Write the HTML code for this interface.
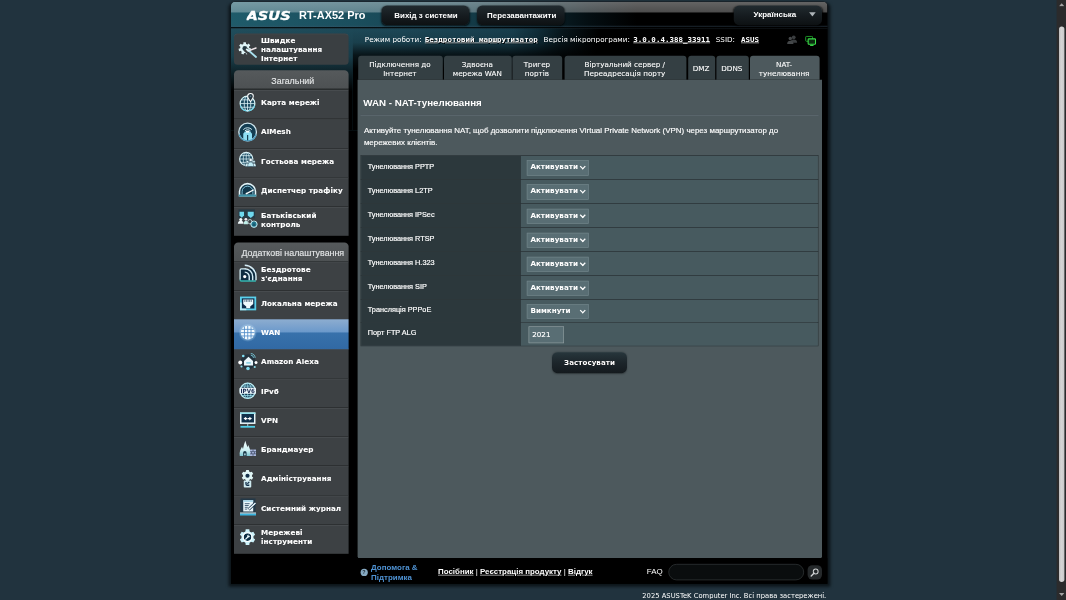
<!DOCTYPE html>
<html lang="uk">
<head>
<meta charset="utf-8">
<title>ASUS Wireless Router RT-AX52 Pro - NAT-тунелювання</title>
<style>
html,body{margin:0;padding:0;width:1066px;height:600px;overflow:hidden;background:#21333e;}
#stage{position:absolute;left:0;top:0;width:1777px;height:1000px;transform:scale(0.6);transform-origin:0 0;background:#21333e;font-family:"DejaVu Sans","Liberation Sans",sans-serif;color:#fff;}
.abs{position:absolute;}
#in{left:-1px;top:0;width:996px;height:971px;}
#wrap{left:385px;top:3px;width:994.3px;height:970px;background:#000;border-radius:7px 7px 0 0;overflow:hidden;}
#wrapsh{left:380.5px;top:4px;width:1003px;height:974px;background:#0c1419;border-radius:9px 9px 2px 2px;filter:blur(3px);}
#banner{left:1px;top:0;width:994px;height:44px;background:linear-gradient(180deg,rgba(255,255,255,.48) 0,rgba(255,255,255,.39) 1px,rgba(255,255,255,.30) 17.2px,rgba(255,255,255,0) 18.4px),linear-gradient(90deg,#1f5b6a 0%,#1b4f5e 20%,#153f4c 38%,#0c2831 50%,#040e12 60%,#000 68%);}
#bannerline{left:0;top:38.5px;width:996px;height:7px;background:linear-gradient(180deg,rgba(0,0,0,0) 0,rgba(60,85,105,.35) 1.5px,rgba(60,85,105,.35) 3px,rgba(0,0,0,.8) 3.6px,rgba(0,0,0,.8) 5px,rgba(50,70,85,.25) 5.600px,rgba(0,0,0,0) 7px);}
#under{left:0;top:44px;width:996px;height:170px;background:linear-gradient(100deg,#225261 0%,#1e4b5b 28%,#194252 46%,#10303c 50%,#08181e 54%,#000 60%);}
#underfade{left:204px;top:44px;width:792px;height:170px;background:linear-gradient(180deg,rgba(0,0,0,.05) 0,rgba(0,0,0,.18) 14%,rgba(0,0,0,.72) 26%,#000 40%);}
#underfadeL{left:0;top:44px;width:204px;height:170px;background:linear-gradient(180deg,rgba(0,0,0,.05) 0,rgba(0,0,0,.22) 28%,rgba(0,0,0,.55) 42%,#000 62%);}
.logo{left:26.5px;top:8px;}
.model{left:114.5px;top:11.5px;font:bold 18.25px "Liberation Sans",sans-serif;color:#fff;white-space:nowrap;}
.tbtn{top:5.8px;height:33.4px;width:146px;border-radius:9px;background:linear-gradient(180deg,#222b30 0,#161c20 50%,#0d1113 100%);box-shadow:0 1px 3px rgba(0,0,0,.8);font:bold 13.25px "Liberation Sans",sans-serif;color:#fff;text-align:center;line-height:34.5px;white-space:nowrap;padding-left:3px;box-sizing:border-box;}
.status{top:55.5px;font:12px "DejaVu Sans",sans-serif;color:#fff;white-space:nowrap;}
.status.lk{font:bold 12.5px "DejaVu Sans Mono","Liberation Mono",monospace;text-decoration:underline;text-shadow:1px 1px 0 #000;top:55px;}
.qis,.mhead,.mitem{left:6px;width:191px;}
.qis{top:53px;height:52.3px;border-radius:6px;background:#3a3f42;box-shadow:inset 0 1px 0 rgba(255,255,255,.07);}
.mhead{height:31.2px;background:linear-gradient(180deg,#565a5c,#4d5153);border-radius:7px 7px 0 0;font:14.8px "Liberation Sans",sans-serif;color:#e6e8e9;-webkit-text-stroke:.2px #e6e8e9;text-align:center;line-height:36.5px;white-space:nowrap;padding-left:5px;box-sizing:border-box;}
.mitem{height:47.9px;background:#3d4144;border-top:1px solid #2d3133;box-shadow:inset 0 1px 0 rgba(255,255,255,.11);}
.mitem span,.qis span{position:absolute;left:45px;top:-2.5px;height:48px;display:flex;align-items:center;font:bold 12px/15px "DejaVu Sans",sans-serif;color:#fff;white-space:nowrap;-webkit-text-stroke:.15px #fff;letter-spacing:.1px;}
.qis span{height:52px;top:0;}
.mitem.sel{background:linear-gradient(180deg,#8dadd0 0,#6d9acb 41%,#3871ab 47%,#3169a4 100%);margin-top:0;height:50px;border-top:none;box-shadow:none;z-index:2;}
.mitem.sel .ico{top:5.5px;}.mitem.sel span{top:-1.5px;}
.ico{position:absolute;left:6px;top:4.5px;width:32px;height:32px;overflow:visible;}
.qis .ico{top:10px;}
.tab{top:90px;height:40px;background:#343f43;border-radius:5px 5px 0 0;font:12px/15px "DejaVu Sans",sans-serif;color:#fff;text-align:center;display:flex;align-items:center;justify-content:center;padding-top:3px;padding-right:2px;box-sizing:border-box;-webkit-text-stroke:.15px #fff;}
.tab.on{background:#4d595d;}
#panel{left:212px;top:130px;width:773.5px;height:798px;background:#4d595d;border-radius:0 0 4px 4px;}
.ptitle{left:9.5px;top:27.5px;font:bold 16.25px "Liberation Sans",sans-serif;color:#fff;white-space:nowrap;}
.psep{left:5px;top:58px;width:763px;height:1px;background:#66737a;border-top:1px solid #3d484c;}
.pdesc{left:10.5px;top:72.5px;width:760px;font:13.25px/21.3px "Liberation Sans",sans-serif;color:#fff;-webkit-text-stroke:.25px #fff;}
#tbl{left:5px;top:125.5px;width:763px;border-bottom:1px solid #222b2e;}
.row{position:relative;height:40.17px;border:1px solid #222b2e;border-bottom:none;display:flex;box-sizing:border-box;}
.row:nth-child(7){height:37.7px;}.row:nth-child(8){height:39px;}
.row:nth-child(7) .th{line-height:33.5px;}.row:nth-child(7) .sel2{top:6.5px;height:24.5px;line-height:21px;}
.row .th{width:266px;background:#2c383c;font:12.2px "Liberation Sans",sans-serif;color:#fff;line-height:35.5px;padding-left:11px;box-sizing:border-box;border-right:1px solid #222b2e;white-space:nowrap;-webkit-text-stroke:.3px #fff;}
.row .td{flex:1;background:#475a5f;position:relative;}
.sel2{position:absolute;left:10px;top:7.8px;height:25.3px;width:103px;box-sizing:border-box;background:#596e74;border:1px solid #74878c;font:bold 12px/21.5px "DejaVu Sans",sans-serif;color:#fff;padding-left:5px;white-space:nowrap;}
.sel2 i{position:absolute;right:6px;top:6px;width:4.5px;height:4.5px;border:solid #fff;border-width:0 2.4px 2.4px 0;transform:rotate(45deg);}
.inp{position:absolute;left:13px;top:5.7px;height:28.5px;width:59px;box-sizing:border-box;background:#596e74;border:1px solid #929ea1;font:12px/24px "DejaVu Sans",sans-serif;color:#fff;padding-left:5px;-webkit-text-stroke:.25px #fff;}
.apply{left:324px;top:454px;width:125px;height:35px;border-radius:9px;background:linear-gradient(180deg,#27363c 0,#1c252a 50%,#141a1e 100%);box-shadow:0 1px 3px rgba(0,0,0,.35);text-shadow:1px 1px 1px #000;font:bold 12px/34px "DejaVu Sans",sans-serif;color:#fff;text-align:center;}
.foot{top:927px;left:0;width:996px;height:44px;background:#000;}
.hico{left:216.5px;top:17.5px;width:12px;height:12px;border-radius:50%;background:#86a9c2;font:bold 9px/12px "Liberation Sans",sans-serif;color:#1c2a33;text-align:center;}
.help{left:234.5px;top:8px;font:bold 13.25px/15.6px "Liberation Sans",sans-serif;color:#4f93d4;white-space:nowrap;}
.flinks{left:346px;top:15px;font:bold 13.2px "Liberation Sans",sans-serif;color:#fff;white-space:nowrap;}
.flinks u{text-decoration:underline;}
.flinks s{text-decoration:none;font-weight:normal;}
.faq{left:694px;top:14.5px;font:13.25px "Liberation Sans",sans-serif;color:#fff;}
.fsearch{left:730px;top:10px;width:226px;height:27px;border-radius:13.5px;background:#0a0d0e;border:1.5px solid #3c4143;box-sizing:border-box;}
.fbtn{left:961.5px;top:11.5px;width:24px;height:24px;border-radius:8px;background:#25292b;}
.copy{left:1070.5px;top:986.5px;font:11.3px "DejaVu Sans",sans-serif;color:#fff;white-space:nowrap;}
#sb{left:1760.5px;top:0;width:16.5px;height:1000px;background:#2b2b2c;}
#sbt{left:1764.5px;top:43.5px;width:9px;height:926.5px;border-radius:4.5px;background:linear-gradient(90deg,#bdbdbd,#d6d6d6 40%,#c9c9c9);}
.sba{left:1764.5px;width:9px;height:6px;}
</style>
</head>
<body>
<div id="stage">
 <div id="wrapsh" class="abs"></div>
 <div id="wrap" class="abs"><div class="abs" id="in">
  <div id="under" class="abs"></div>
  <div id="underfade" class="abs"></div><div id="underfadeL" class="abs"></div>
  <div id="banner" class="abs"></div>
  <div id="bannerline" class="abs"></div>
  <svg class="abs logo" width="80" height="24" viewBox="0 0 80 24"><text x="0" y="22" font-family="DejaVu Sans,sans-serif" font-weight="bold" font-style="oblique" font-size="20" fill="#fff" stroke="#fff" stroke-width="0.6" textLength="73.500" lengthAdjust="spacingAndGlyphs">ASUS</text></svg>
  <div class="abs model">RT-AX52 Pro</div>
  <div class="abs tbtn" style="left:251.5px;">Вихід з системи</div>
  <div class="abs tbtn" style="left:411px;">Перезавантажити</div>
  <div class="abs tbtn" style="left:838.5px;width:147px;text-align:left;text-indent:30.500px;line-height:29px;">Українська<svg class="abs" style="left:125px;top:11.500px" width="12" height="8" viewBox="0 0 12 8"><path d="M0.500 0.500h11l-5.500 7z" fill="#aeb4b8"/></svg></div>
  <div class="abs status" style="left:224px;">Режим роботи:</div>
  <div class="abs status lk" style="left:324px;">Бездротовий маршрутизатор</div>
  <div class="abs status" style="left:522px;">Версія мікропрограми:</div>
  <div class="abs status lk" style="left:671.5px;">3.0.0.4.388_33911</div>
  <div class="abs status" style="left:809px;">SSID:</div>
  <div class="abs status lk" style="left:851px;">ASUS</div>
  <svg class="abs" style="left:927px;top:53.5px" width="19" height="19" viewBox="0 0 20 20"><circle cx="12.500" cy="5.500" r="3.300" fill="#3a3d3f"/><path d="M6.500 15c0-4 2.500-5.500 6-5.500s6 1.500 6 5.500z" fill="#3a3d3f"/><circle cx="6.500" cy="7.500" r="3" fill="#444749"/><path d="M1 17c0-4 2-5.500 5.500-5.500s5.500 1.500 5.500 5.500z" fill="#444749"/></svg>
  <svg class="abs" style="left:957px;top:55.5px" width="20" height="18" viewBox="0 0 24 22"><rect x="2" y="2" width="14" height="10" rx="1.500" fill="none" stroke="#1f9d2a" stroke-width="2"/><rect x="7" y="7" width="15" height="11" rx="1.500" fill="#0c2a10" stroke="#3be04a" stroke-width="2.200"/><path d="M11 20.500h7" stroke="#3be04a" stroke-width="2"/></svg>

  <div class="abs qis"><svg class="ico" viewBox="0 0 32 32"><g transform="translate(0,0)"><circle cx="12" cy="14.8" r="7.4" fill="#dff5f8"/><polygon points="19.36,14.00 22.50,14.83 21.68,18.86 18.46,18.40 17.21,20.05 18.53,23.03 14.86,24.90 13.21,22.10 11.14,22.15 9.64,25.03 5.88,23.33 7.05,20.30 5.72,18.71 2.53,19.33 1.51,15.34 4.61,14.36 5.02,12.33 2.55,10.22 5.04,6.94 7.74,8.75 9.58,7.81 9.69,4.56 13.81,4.46 14.07,7.70 15.96,8.55 18.57,6.61 21.21,9.76 18.85,11.99" fill="#dff5f8"/><circle cx="12" cy="14.8" r="4" fill="#243a44"/><path d="M13 16L31 32" stroke="#3a3f42" stroke-width="8"/><path d="M17 17L30.700 29" stroke="#a8e0ee" stroke-width="3" stroke-linecap="round"/><path d="M18.500 18.500L30.700 14" stroke="#efe6ea" stroke-width="2.400" stroke-linecap="round"/><path d="M14.500 15.500l4 4" stroke="#dff5f8" stroke-width="3"/></g></svg><span>Швидке<br>налаштування<br>Інтернет</span></div>
  <div class="abs mhead" style="top:114.3px;">Загальний</div>
  <div class="abs mitem" style="top:146.0px;"><svg class="ico" viewBox="0 0 32 32"><g transform="translate(0,0)"><circle cx="16.5" cy="17.6" r="12.3" fill="#1a4a60" stroke="#d5f3f6" stroke-width="2"/><path d="M28.300 21a12.300 12.300 0 0 1-23.600 0" fill="none" stroke="#56c8e0" stroke-width="2"/><ellipse cx="16.5" cy="17.6" rx="5.500" ry="12.300" fill="none" stroke="#dff5fa" stroke-width="1.300"/><path d="M4.200 17.600h24.600M16.500 5.300v24.600M6 11.500h21M6 23.700h21" stroke="#dff5fa" stroke-width="1.300" fill="none"/><path d="M21.500 14.500C19 10.500 16.800 8.300 16.800 5.500a4.700 4.700 0 0 1 9.400 0C26.200 8.300 24 10.500 21.500 14.500z" fill="#263640" stroke="#fff" stroke-width="1.700"/><circle cx="21.500" cy="5.500" r="1.400" fill="#5d7a88"/></g></svg><span>Карта мережі</span></div>
  <div class="abs mitem" style="top:194.8px;"><svg class="ico" viewBox="0 0 32 32"><g transform="translate(0,0)"><circle cx="16.7" cy="16.900" r="14.700" fill="#143d52" stroke="#cfe6ee" stroke-width="2.200"/><path d="M2.600 21a14.700 14.700 0 0 0 28.200 0" fill="none" stroke="#4a9cc0" stroke-width="2.200"/><path d="M9.500 13a10 10 0 0 1 14.400 0M12 15.300a6.500 6.500 0 0 1 9.400 0" stroke="#d5eef5" stroke-width="1.600" fill="none"/><path d="M9.400 28.500v-8.500l3-4h8.600l3 4v8.500a14.700 14.700 0 0 1-14.600 0z" fill="#8fdff5"/><rect x="13.900" y="15" width="5.600" height="3" fill="#eefafd"/><rect x="15.700" y="22" width="2" height="9" fill="#143d52"/></g></svg><span>AiMesh</span></div>
  <div class="abs mitem" style="top:243.6px;"><svg class="ico" viewBox="0 0 32 32"><g transform="translate(0,0)"><circle cx="14.400" cy="13" r="11" fill="#1b4b62" stroke="#d6f0f6" stroke-width="2"/><ellipse cx="14.400" cy="13" rx="5" ry="11" fill="none" stroke="#dff5fa" stroke-width="1.200"/><path d="M3.400 13h22M14.400 2v22M5 7.500h19M5 18.500h19" stroke="#dff5fa" stroke-width="1.200" fill="none"/><circle cx="16.300" cy="17.500" r="2.100" fill="#d8f2f8" stroke="#1b3a4a" stroke-width=".7"/><path d="M12.800 25.500c0-3.800 1.400-5.300 3.500-5.300s3.500 1.500 3.500 5.300z" fill="#d8f2f8" stroke="#1b3a4a" stroke-width=".7"/><circle cx="27.300" cy="17.500" r="2.100" fill="#d8f2f8" stroke="#1b3a4a" stroke-width=".7"/><path d="M23.800 25.500c0-3.800 1.400-5.300 3.500-5.300s3.500 1.500 3.500 5.300z" fill="#d8f2f8" stroke="#1b3a4a" stroke-width=".7"/><circle cx="21.800" cy="14.700" r="2.800" fill="#f0fbfe" stroke="#1b3a4a" stroke-width=".8"/><path d="M16.800 25.500c0-5 2-7.300 5-7.300s5 2.300 5 7.300z" fill="#bfeaf5" stroke="#1b3a4a" stroke-width=".8"/></g></svg><span>Гостьова мережа</span></div>
  <div class="abs mitem" style="top:292.3px;"><svg class="ico" viewBox="0 0 32 32"><g transform="translate(0,0)"><path d="M3.200 25V18.300a13.300 13.300 0 0 1 26.600 0V25z" fill="#12384c" stroke="#e3f4f8" stroke-width="2.600"/><path d="M7.500 23v-4.700a9 9 0 0 1 18 0V23" fill="none" stroke="#8fcfe6" stroke-width="1.500"/><path d="M14.800 21.700L27 15.200" stroke="#fff" stroke-width="2"/><circle cx="14.800" cy="21.700" r="1.500" fill="#fff"/><rect x="2" y="23.300" width="29" height="3.400" fill="#3d93a8"/></g></svg><span>Диспетчер трафіку</span></div>
  <div class="abs mitem" style="top:341.1px;"><svg class="ico" viewBox="0 0 32 32"><g transform="translate(0,0)"><rect x="1.500" y="-1" width="27.500" height="15" fill="#0f3448" opacity=".5"/><path d="M3.200 2.800h7.500v6.500l-3.750 3.500-3.750-3.500z" fill="#6fd8ee"/><path d="M16.900 2.800h10v6.500l-5 3.900-5-3.900z" fill="#6fd8ee"/><circle cx="5.300" cy="16" r="2.600" fill="#f2fafc"/><path d="M0.500 23c0-3.800 2-5.200 4.800-5.200s4.800 1.400 4.800 5.200z" fill="#f2fafc"/><circle cx="13.800" cy="15.500" r="2.300" fill="#f3e8f0"/><path d="M10.300 23.700c0-4 1.500-5.700 3.500-5.700s3.500 1.700 3.500 5.700z" fill="#bfeee8"/><circle cx="20.500" cy="19.500" r="3.600" fill="none" stroke="#d8f2f6" stroke-width="1.300"/><circle cx="27.300" cy="23.700" r="5.300" fill="#2a8aa0" stroke="#d8f2f6" stroke-width="1.500"/><rect x="24.800" y="22.300" width="5" height="4.400" fill="#185a70"/><path d="M25.800 22.300v-1.300a1.500 1.500 0 0 1 3 0v1.300" fill="none" stroke="#185a70" stroke-width="1"/></g></svg><span>Батьківський<br>контроль</span></div>
  <div class="abs mhead" style="top:400.7px;">Додаткові налаштування</div>
  <div class="abs mitem" style="top:431.7px;"><svg class="ico" viewBox="0 0 32 32"><g transform="translate(0,0)"><rect x="4.200" y="8.250" width="25.500" height="20" rx="2" fill="#0e2c40"/><path d="M4.200 26.300V10.250a2 2 0 0 1 2-2H13" stroke="#d5eef5" stroke-width="2.200" fill="none"/><path d="M4.200 26.300a2 2 0 0 0 2 2H30.500" stroke="#35b5b0" stroke-width="2.400" fill="none"/><path d="M11.900 13.500a7.500 7.500 0 0 1 7.500 7.500v6M11.900 7.800a13.200 13.200 0 0 1 13.200 13.200v6M11.900 2.200a18.800 18.800 0 0 1 18.800 18.800v6" fill="none" stroke="#d5ecf5" stroke-width="2.400"/><circle cx="11.900" cy="21" r="2.700" fill="#fff"/></g></svg><span>Бездротове<br>з'єднання</span></div>
  <div class="abs mitem" style="top:480.5px;"><svg class="ico" viewBox="0 0 32 32"><g transform="translate(0,0)"><rect x="5.500" y="6.750" width="24" height="20" fill="#0e2c4a" stroke="#5ad0ec" stroke-width="3"/><path d="M5.500 15v11.750h9" stroke="#d8f4fa" stroke-width="3" fill="none" opacity=".75"/><path d="M9.400 10.250h16.600v7.500l-5 4v3h-6.600v-3l-5-4z" fill="#f0fafd"/><path d="M12 10.250v4M14.700 10.250v4M17.400 10.250v4M20.100 10.250v4M22.800 10.250v4" stroke="#0e2c4a" stroke-width="1"/></g></svg><span>Локальна мережа</span></div>
  <div class="abs mitem sel" style="top:529.3px;"><svg class="ico" viewBox="0 0 32 32"><g transform="translate(0,0)"><defs><radialGradient id="wg"><stop offset="0.65" stop-color="#dff4ff" stop-opacity=".5"/><stop offset="1" stop-color="#bfe6ff" stop-opacity="0"/></radialGradient></defs><circle cx="16.900" cy="16.400" r="15.500" fill="url(#wg)"/><circle cx="16.900" cy="16.400" r="11.500" fill="#f6fcff"/><path d="M6.500 10.900h20.800M5.400 16.400h23M6.500 21.900h20.800M11.400 6.300v20.200M16.900 4.900v23M22.400 6.300v20.200" stroke="#4f8cc8" stroke-width="1.400"/></g></svg><span>WAN</span></div>
  <div class="abs mitem" style="top:578.0px;"><svg class="ico" viewBox="0 0 32 32"><g transform="translate(0,0)"><circle cx="17.500" cy="16" r="12.500" fill="#10283a" opacity=".55"/><path d="M10.700 14.500L18.200 7.600l7.500 6.900v7.700h-15z" fill="#eaf7fb"/><rect x="14.500" y="16.300" width="7.400" height="3" fill="#8fcfe2"/><circle cx="4.400" cy="17.200" r="3.300" fill="#fff"/><circle cx="30.700" cy="17.200" r="2.500" fill="#fff"/><circle cx="17.300" cy="27.200" r="3" fill="#7fdcf0"/><circle cx="9.400" cy="6.300" r="2.200" fill="#7fdcf0"/><circle cx="6.500" cy="23.800" r="1.800" fill="#8fe0ee"/><circle cx="28.600" cy="24.700" r="1.800" fill="#8fe0ee"/><path d="M22 5a4.500 4.500 0 0 1 4.500 4.500M22 2.200a7.300 7.300 0 0 1 7.300 7.300" stroke="#7fdcf0" stroke-width="1.300" fill="none"/></g></svg><span>Amazon Alexa</span></div>
  <div class="abs mitem" style="top:626.8px;"><svg class="ico" viewBox="0 0 32 32"><g transform="translate(0,0)"><circle cx="16.900" cy="16.400" r="12.700" fill="#123a52" stroke="#bfeef4" stroke-width="2"/><ellipse cx="16.900" cy="16.400" rx="6" ry="12.700" fill="none" stroke="#9fe0ee" stroke-width="1.300"/><path d="M16.900 3.700v25.400M6.500 8.500h20.800M6.500 24.300h20.800" stroke="#9fe0ee" stroke-width="1.300"/><rect x="3.200" y="11.400" width="27.400" height="10" rx="1.500" fill="#eef8fc"/><text x="16.900" y="20" text-anchor="middle" font-family="DejaVu Sans,sans-serif" font-weight="bold" font-size="9.500" fill="#1a2a50" textLength="24" lengthAdjust="spacingAndGlyphs">IPV6</text></g></svg><span>IPv6</span></div>
  <div class="abs mitem" style="top:675.6px;"><svg class="ico" viewBox="0 0 32 32"><g transform="translate(0,0)"><rect x="5.250" y="4.650" width="23.300" height="16.700" fill="#10304a" stroke="#e8f6fa" stroke-width="2.500"/><path d="M4 4.650h25.800" stroke="#8fe4ee" stroke-width="2.500"/><path d="M9.800 13.600l4.500-3.200v2.200h2.200v2h-2.200v2.200zM24 13.600l-4.500-3.200v2.200h-2.200v2h2.200v2.200z" fill="#fff"/><path d="M16.900 22.600v3.500" stroke="#bfeaf2" stroke-width="1.400"/><rect x="4.800" y="25.900" width="24.200" height="2.900" fill="#4fd0ea"/></g></svg><span>VPN</span></div>
  <div class="abs mitem" style="top:724.4px;"><svg class="ico" viewBox="0 0 32 32"><g transform="translate(0,0)"><defs><linearGradient id="fg" x1="0" y1="0" x2="0" y2="1"><stop offset="0" stop-color="#f2fcfc"/><stop offset=".6" stop-color="#d0f2f4"/><stop offset="1" stop-color="#7fc8d4"/></linearGradient></defs><path d="M3.600 27C2.500 20 5 16 7.300 11.500L9 15.500C10 10 11.500 6 12.800 1.700C14 6 15.500 9 16.500 12.500L17.800 8.500C19.500 13 21.500 17 21.500 21L21.500 27z" fill="url(#fg)"/><path d="M9.200 27v-5.500a2.900 2.900 0 0 1 5.800 0V27z" fill="#1c3a4a"/><rect x="11" y="22.500" width="2.400" height="3.500" rx="1" fill="#bfe8f0"/><rect x="20.700" y="16.250" width="10" height="10.750" fill="#aab8dd"/><path d="M20.700 19.800h10M20.700 23.400h10M25.700 16.250v3.550M23.200 19.800v3.600M28.200 19.800v3.600M25.700 23.400v3.600" stroke="#2a3550" stroke-width="1"/></g></svg><span>Брандмауер</span></div>
  <div class="abs mitem" style="top:773.2px;"><svg class="ico" viewBox="0 0 32 32"><g transform="translate(0,0)"><circle cx="16.5" cy="10.9" r="7.3" fill="#e0f6f6"/><polygon points="23.70,12.09 26.07,13.79 23.79,17.75 21.13,16.54 19.07,17.73 18.78,20.64 14.22,20.64 13.93,17.73 11.87,16.54 9.21,17.75 6.93,13.79 9.30,12.09 9.30,9.71 6.93,8.01 9.21,4.05 11.87,5.26 13.93,4.07 14.22,1.16 18.78,1.16 19.07,4.07 21.13,5.26 23.79,4.05 26.07,8.01 23.70,9.71" fill="#e0f6f6"/><circle cx="16.5" cy="10.9" r="3.5" fill="#13304a"/><rect x="10.250" y="18.800" width="12.500" height="11.700" rx="1.500" fill="#cfeaf0"/><path d="M14 21.500v3.300a2 2 0 0 0 2 2h3.500" stroke="#13304a" stroke-width="2.200" fill="none"/><path d="M16.300 24.300l3.200-3.200" stroke="#13304a" stroke-width="2"/></g></svg><span>Адміністрування</span></div>
  <div class="abs mitem" style="top:821.9px;"><svg class="ico" viewBox="0 0 32 32"><g transform="translate(0,0)"><rect x="4.800" y="0.800" width="25" height="22.500" fill="#12324a" opacity=".6"/><rect x="9.400" y="3.750" width="16.600" height="18.750" fill="#eaf6fb"/><rect x="9.400" y="3.750" width="16.600" height="2.800" fill="#a8d8ea"/><path d="M12 9.500h8M12 12.500h6.500M12 15.500h5M12 18.500h4" stroke="#1a3a55" stroke-width="1.300"/><path d="M29.800 8.300L18.200 19.200" stroke="#12324a" stroke-width="4.800"/><path d="M29.800 8.300L18.200 19.200" stroke="#f4fbff" stroke-width="2.400"/><rect x="4" y="24.200" width="26.700" height="2" fill="#cfeef8"/><rect x="4" y="26.200" width="26.700" height="3" fill="#3ab5e0"/></g></svg><span>Системний журнал</span></div>
  <div class="abs mitem" style="top:870.7px;"><svg class="ico" viewBox="0 0 32 32"><g transform="translate(0,0)"><circle cx="16.5" cy="16.2" r="9.8" fill="#cdf2fa"/><polygon points="26.17,17.80 29.23,20.04 26.20,25.30 22.72,23.78 19.95,25.37 19.54,29.15 13.46,29.15 13.05,25.37 10.28,23.78 6.80,25.30 3.77,20.04 6.83,17.80 6.83,14.60 3.77,12.36 6.80,7.10 10.28,8.62 13.05,7.03 13.46,3.25 19.54,3.25 19.95,7.03 22.72,8.62 26.20,7.10 29.23,12.36 26.17,14.60" fill="#cdf2fa"/><circle cx="16.5" cy="16.2" r="6.3" fill="#0c2e44"/><circle cx="16.500" cy="16.200" r="7.400" fill="none" stroke="#fff" stroke-width="1.800"/><path d="M13.500 19.500l3.500-3.500" stroke="#e8f8fc" stroke-width="2.200" stroke-linecap="round"/><circle cx="18.300" cy="14.500" r="2.400" fill="#e8f8fc"/><circle cx="19.400" cy="13.400" r="1.200" fill="#0c2e44"/></g></svg><span>Мережеві<br>інструменти</span></div>

  <div class="abs tab" style="left:213px;width:141px;">Підключення до<br>Інтернет</div>
  <div class="abs tab" style="left:356px;width:113px;">Здвоєна<br>мережа WAN</div>
  <div class="abs tab" style="left:470.3px;width:83.2px;">Тригер<br>портів</div>
  <div class="abs tab" style="left:556.5px;width:203.5px;">Віртуальний сервер /<br>Переадресація порту</div>
  <div class="abs tab" style="left:762.800px;width:45.200px;">DMZ</div>
  <div class="abs tab" style="left:810px;width:53.500px;">DDNS</div>
  <div class="abs tab on" style="left:866px;width:115.700px;">NAT-<br>тунелювання</div>

  <div id="panel" class="abs">
   <div class="abs ptitle">WAN - NAT-тунелювання</div>
   <div class="abs psep"></div>
   <div class="abs pdesc">Активуйте тунелювання NAT, щоб дозволити підключення Virtual Private Network (VPN) через маршрутизатор до мережевих клієнтів.</div>
   <div id="tbl" class="abs">
    <div class="row"><div class="th">Тунелювання PPTP</div><div class="td"><div class="sel2">Активувати<i></i></div></div></div>
    <div class="row"><div class="th">Тунелювання L2TP</div><div class="td"><div class="sel2">Активувати<i></i></div></div></div>
    <div class="row"><div class="th">Тунелювання IPSec</div><div class="td"><div class="sel2">Активувати<i></i></div></div></div>
    <div class="row"><div class="th">Тунелювання RTSP</div><div class="td"><div class="sel2">Активувати<i></i></div></div></div>
    <div class="row"><div class="th">Тунелювання H.323</div><div class="td"><div class="sel2">Активувати<i></i></div></div></div>
    <div class="row"><div class="th">Тунелювання SIP</div><div class="td"><div class="sel2">Активувати<i></i></div></div></div>
    <div class="row"><div class="th">Трансляція PPPoE</div><div class="td"><div class="sel2">Вимкнути<i></i></div></div></div>
    <div class="row"><div class="th">Порт FTP ALG</div><div class="td"><div class="inp">2021</div></div></div>
   </div>
   <div class="abs apply">Застосувати</div>
  </div>

  <div class="abs foot">
   <div class="abs hico">?</div>
   <div class="abs help">Допомога &amp;<br>Підтримка</div>
   <div class="abs flinks"><u>Посібник</u><s> | </s><u>Реєстрація продукту</u><s> | </s><u>Відгук</u></div>
   <div class="abs faq">FAQ</div>
   <div class="abs fsearch"></div>
   <div class="abs fbtn"><svg class="abs" style="left:4px;top:4px" width="16" height="16" viewBox="0 0 16 16"><circle cx="9.500" cy="6.500" r="4" fill="none" stroke="#cfd2d3" stroke-width="1.700"/><path d="M6.500 9.500l-4.500 4.500" stroke="#cfd2d3" stroke-width="2.300" stroke-linecap="round"/></svg></div>
  </div>
 </div></div>
 <div class="abs copy">2025 ASUSTeK Computer Inc. Всі права застережені.</div>
 <div id="sb" class="abs"></div>
 <div id="sbt" class="abs"></div>
 <svg class="abs sba" style="top:5px" viewBox="0 0 9 6"><path d="M0 5.500l4.500-5 4.500 5z" fill="#a3a3a3"/></svg>
 <svg class="abs sba" style="top:988px" viewBox="0 0 9 6"><path d="M0 0.500l4.500 5 4.500-5z" fill="#a3a3a3"/></svg>
</div>
</body>
</html>
